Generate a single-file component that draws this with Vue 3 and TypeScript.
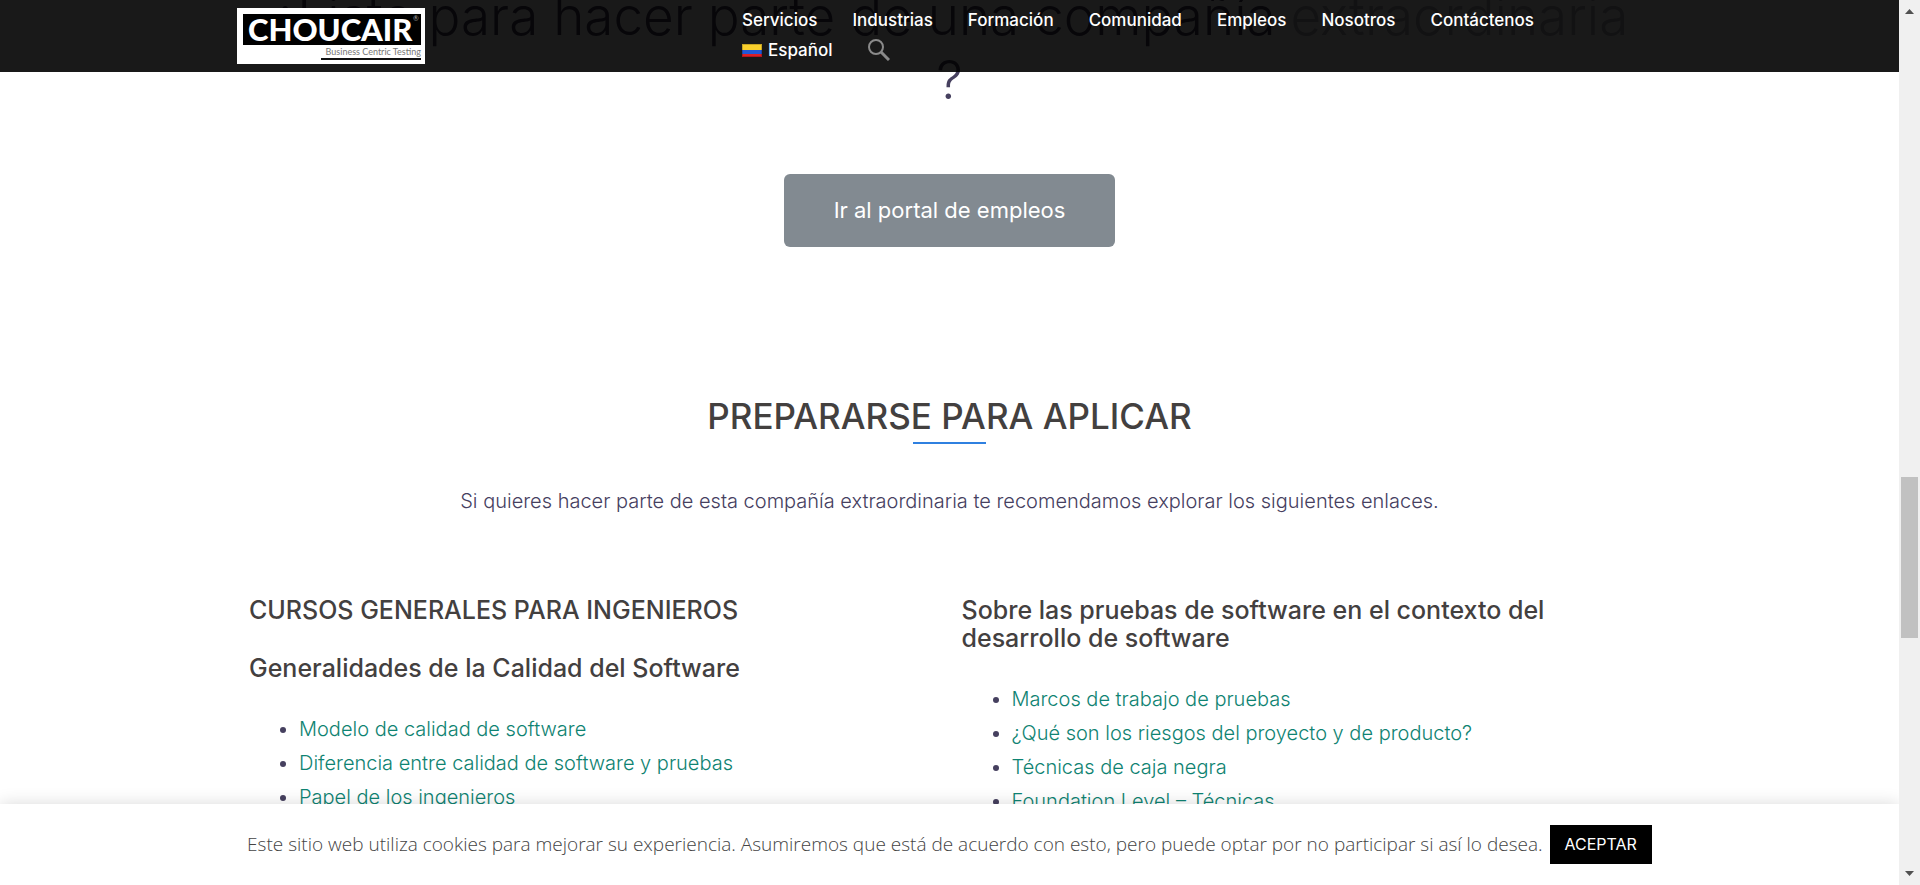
<script setup lang="ts">
interface Course {
  label: string
  href: string
}

const menu: string[] = ['Servicios', 'Industrias', 'Formación', 'Comunidad', 'Empleos', 'Nosotros', 'Contáctenos']

const qualityCourses: Course[] = [
  { label: 'Modelo de calidad de software', href: '#modelo' },
  { label: 'Diferencia entre calidad de software y pruebas', href: '#diferencia' },
  { label: 'Papel de los ingenieros', href: '#papel' },
]

const testingCourses: Course[] = [
  { label: 'Marcos de trabajo de pruebas', href: '#marcos' },
  { label: '¿Qué son los riesgos del proyecto y de producto?', href: '#riesgos' },
  { label: 'Técnicas de caja negra', href: '#caja-negra' },
  { label: 'Foundation Level – Técnicas', href: '#foundation' },
]
</script>

<template>
  <div class="window">
    <div class="viewport">
      <header class="site-header">
        <div class="header-inner">
          <a class="logo" href="#inicio" aria-label="Choucair">
            <svg width="188" height="56" viewBox="0 0 188 56">
              <rect width="188" height="56" fill="#fff" />
              <rect x="6" y="6" width="178" height="31" fill="#000" />
              <text class="logo-name" x="11" y="33">CHOUCAIR</text>
              <text class="logo-mark" x="176" y="13">®</text>
              <text class="logo-tag" x="184" y="47" text-anchor="end">Business Centric Testing</text>
              <rect x="84" y="50" width="100" height="2" fill="#111" />
            </svg>
          </a>
          <nav class="menu">
            <a v-for="item in menu" :key="item" href="#menu">{{ item }}</a>
            <a class="language" href="#idioma">
              <svg width="20" height="13" viewBox="0 0 20 13">
                <rect width="20" height="6" fill="#f8cf2c" />
                <rect y="6" width="20" height="4" fill="#2157d6" />
                <rect y="10" width="20" height="3" fill="#dc1f26" />
                <rect x="0.5" y="0.5" width="19" height="12" fill="none" stroke="#000" stroke-opacity="0.2" />
              </svg>
              Español
            </a>
            <button class="search" type="button" aria-label="Buscar">
              <svg width="22" height="22" viewBox="0 0 22 22" fill="none" stroke="#8a8a8a">
                <circle cx="8" cy="8" r="7" stroke-width="2" />
                <path d="M13 13 L21 21" stroke-width="3" />
              </svg>
            </button>
          </nav>
        </div>
      </header>

      <main class="content">
        <h2 class="hero">
          ¿Listo para hacer parte de una compañía <span class="fading">extraordinaria</span>
          <span class="hero-end">?</span>
        </h2>
        <a class="portal" href="#portal">Ir al portal de empleos</a>

        <h2 class="title">PREPARARSE PARA APLICAR</h2>
        <p class="intro">
          Si quieres hacer parte de esta compañía extraordinaria te recomendamos explorar los siguientes enlaces.
        </p>

        <div class="columns">
          <section>
            <h3>CURSOS GENERALES PARA INGENIEROS</h3>
            <h4>Generalidades de la Calidad del Software</h4>
            <ul>
              <li v-for="course in qualityCourses" :key="course.href">
                <a :href="course.href">{{ course.label }}</a>
              </li>
            </ul>
          </section>
          <section>
            <h4>Sobre las pruebas de software en el contexto del desarrollo de software</h4>
            <ul>
              <li v-for="course in testingCourses" :key="course.href">
                <a :href="course.href">{{ course.label }}</a>
              </li>
            </ul>
          </section>
        </div>
      </main>

      <aside class="cookies">
        <p>
          Este sitio web utiliza cookies para mejorar su experiencia. Asumiremos que está de acuerdo con esto, pero puede optar por no participar si así lo desea.
        </p>
        <button type="button">ACEPTAR</button>
      </aside>
    </div>

    <div class="scrollbar" aria-hidden="true">
      <svg width="9" height="5" viewBox="0 0 9 5"><path d="M0 5 L4.5 0 L9 5 Z" fill="#505050" /></svg>
      <div class="track"><div class="thumb"></div></div>
      <svg width="9" height="5" viewBox="0 0 9 5"><path d="M0 0 L4.5 5 L9 0 Z" fill="#505050" /></svg>
    </div>
  </div>
</template>

<style>
body {
  margin: 0;
}
</style>

<style scoped>
.window {
  display: flex;
  height: 100vh;
  overflow: hidden;
  background: #fff;
  color: #46405f;
  font-family: Inter, "Open Sans", sans-serif;
  font-weight: 300;
}

a {
  text-decoration: none;
}

.viewport {
  position: relative;
  flex: 1;
  min-width: 0;
  overflow: hidden;
}

.site-header {
  position: absolute;
  inset: 0 0 auto;
  z-index: 2;
  background: rgba(0, 0, 0, 0.9);
}

.header-inner {
  display: grid;
  grid-template-columns: 505px 1fr;
  align-items: center;
  box-sizing: border-box;
  max-width: 1425px;
  min-height: 72px;
  margin: 0 auto;
}

.logo,
.logo svg {
  display: block;
}

.logo-name {
  fill: #fff;
  font: 900 31px Lato, sans-serif;
}

.logo-mark {
  fill: #aaa;
  font: 400 7px Lato, sans-serif;
}

.logo-tag {
  fill: #777;
  font: 400 9px Lato, sans-serif;
}

.menu {
  display: flex;
  flex-wrap: wrap;
  column-gap: 35px;
  max-width: 860px;
  padding-bottom: 2px;
}

.menu a {
  display: flex;
  align-items: center;
  height: 30px;
  color: #fff;
  font-size: 17px;
  font-weight: 500;
}

.language {
  gap: 6px;
}

.search {
  display: flex;
  align-items: center;
  height: 30px;
  padding: 0;
  border: 0;
  background: none;
}

.content {
  max-width: 1401px;
  margin: -16px auto 0;
  text-align: center;
}

.hero {
  margin: 0 0 62px;
  font-size: 53px;
  font-weight: 300;
  line-height: 64px;
}

.fading {
  opacity: 0.4;
}

.hero-end {
  display: block;
}

.portal {
  display: inline-block;
  padding: 20px 50px;
  border-radius: 6px;
  background: #828a91;
  color: #fff;
  font-size: 22px;
  font-weight: 400;
  line-height: 33px;
}

.title {
  margin: 149px 0 0;
  color: #43403f;
  font-size: 35px;
  font-weight: 500;
  line-height: 40px;
}

.title::after {
  display: block;
  width: 73px;
  height: 2px;
  margin: 6px auto 0;
  background: #2f80e0;
  content: "";
}

.intro {
  margin: 40px 0 78px;
  font-size: 20px;
  line-height: 34px;
}

.columns {
  display: grid;
  grid-template-columns: 1fr 1fr;
  gap: 24px;
  text-align: left;
}

h3,
h4 {
  margin: 0 0 30px;
  color: #43403f;
  font-size: 25px;
  font-weight: 500;
  line-height: 28px;
}

ul {
  margin: 0;
  padding-left: 50px;
  font-size: 20px;
  line-height: 34px;
}

li a {
  color: #0f8372;
}

.cookies {
  position: absolute;
  inset: auto 0 0;
  z-index: 2;
  display: flex;
  justify-content: center;
  align-items: center;
  gap: 7px;
  padding: 21px 0;
  background: #fff;
  box-shadow: 0 0 16px rgba(0, 0, 0, 0.15);
  color: #444;
  font-family: "Open Sans", sans-serif;
  font-size: 19px;
}

.cookies p {
  margin: 0;
  padding-bottom: 2px;
  line-height: 30px;
}

.cookies button {
  padding: 0 15px;
  border: 0;
  background: #000;
  color: #fff;
  font: 400 16px/39px Inter, "Open Sans", sans-serif;
}

.scrollbar {
  display: flex;
  flex-direction: column;
  align-items: center;
  box-sizing: border-box;
  width: 21px;
  padding: 9px 0;
  background: #f0f0f0;
}

.track {
  display: grid;
  flex: 1;
  grid-template-rows: 463fr 161fr 233fr;
  width: 17px;
}

.thumb {
  grid-row: 2;
  background: #c1c1c1;
}
</style>
